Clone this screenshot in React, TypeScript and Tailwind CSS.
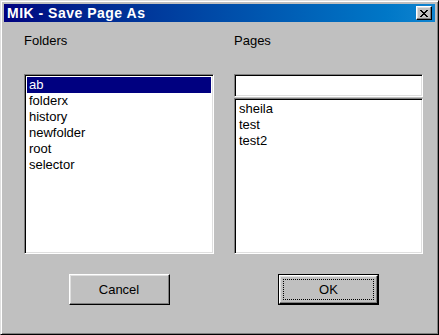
import { useState } from "react";

const folders = ["ab", "folderx", "history", "newfolder", "root", "selector"];
const pages = ["sheila", "test", "test2"];

// sunken 3D well used by list boxes and the text field
const sunken =
    "bg-white border border-t-[#808080] border-l-[#808080] border-b-white border-r-white shadow-[inset_1px_1px_0_0_#000,inset_-1px_-1px_0_0_#dfdfdf]";

const Button = ({ label, isDefault = false }: { label: string; isDefault?: boolean }) => (
    <div className={`w-[101px] h-[31px] ${isDefault ? "border border-black" : ""}`}>
        <button
            className={`w-full h-full flex items-center justify-center bg-[#c0c0c0] border border-t-white border-l-white border-b-black border-r-black shadow-[inset_-1px_-1px_0_0_#808080,inset_1px_1px_0_0_#dfdfdf] text-[13px] text-black ${
                isDefault ? "p-[3px]" : ""
            }`}
        >
            {isDefault ? (
                <span className="w-full h-full flex items-center justify-center border border-dotted border-black">
                    {label}
                </span>
            ) : (
                label
            )}
        </button>
    </div>
);

export default function App() {
    const [selected, setSelected] = useState("ab");
    const [name, setName] = useState("");

    return (
        <div className="w-[439px] h-[335px] bg-[#c0c0c0] font-['Liberation_Sans',Arial,sans-serif] border border-t-[#dfdfdf] border-l-[#dfdfdf] border-b-black border-r-black shadow-[inset_1px_1px_0_0_#fff,inset_-1px_-1px_0_0_#808080] p-[3px] flex flex-col">
            {/* Title bar */}
            <div className="h-[18px] flex items-center justify-between bg-gradient-to-r from-[#000080] to-[#1084d0] pl-[3px] pr-[3px]">
                <span className="text-white font-bold text-[14px] tracking-[0.5px] leading-none">MIK - Save Page As</span>
                <button className="w-[16px] h-[14px] flex items-center justify-center bg-[#c0c0c0] border border-t-white border-l-white border-b-black border-r-black shadow-[inset_-1px_-1px_0_0_#808080,inset_1px_1px_0_0_#dfdfdf]">
                    <svg width="8" height="7" viewBox="0 0 8 7" shapeRendering="crispEdges">
                        <path d="M0 0h2v1h-2zM6 0h2v1h-2zM1 1h2v1h-2zM5 1h2v1h-2zM2 2h4v1h-4zM3 3h2v1h-2zM2 4h4v1h-4zM1 5h2v1h-2zM5 5h2v1h-2zM0 6h2v1h-2zM6 6h2v1h-2z" fill="#000" />
                    </svg>
                </button>
            </div>

            {/* Body */}
            <div className="flex gap-[20px] pl-[20px] pt-[12px]">
                <div className="w-[190px] flex flex-col">
                    <div className="text-[13px] leading-[14px] h-[14px] text-black mb-[26px]">Folders</div>
                    <div className={`${sunken} h-[180px] p-[2px] flex flex-col`}>
                        {folders.map((f) => (
                            <div
                                key={f}
                                onClick={() => setSelected(f)}
                                className={`h-[16px] leading-[16px] text-[13px] pl-[2px] ${
                                    selected === f ? "bg-[#000080] text-white" : "text-black"
                                }`}
                            >
                                {f}
                            </div>
                        ))}
                    </div>
                </div>

                <div className="w-[189px] flex flex-col">
                    <div className="text-[13px] leading-[14px] h-[14px] text-black mb-[26px]">Pages</div>
                    <input
                        value={name}
                        onChange={(e) => setName(e.target.value)}
                        className={`${sunken} h-[23px] px-[3px] text-[13px] outline-none`}
                    />
                    <div className={`${sunken} mt-[1px] h-[156px] p-[2px] flex flex-col`}>
                        {pages.map((p) => (
                            <div key={p} className="h-[16px] leading-[16px] text-[13px] pl-[2px] text-black">
                                {p}
                            </div>
                        ))}
                    </div>
                </div>
            </div>

            {/* Buttons */}
            <div className="flex gap-[20px] pl-[20px] pt-[20px]">
                <div className="w-[190px] flex justify-center">
                    <Button label="Cancel" />
                </div>
                <div className="w-[189px] flex justify-center">
                    <Button label="OK" isDefault />
                </div>
            </div>
        </div>
    );
}
